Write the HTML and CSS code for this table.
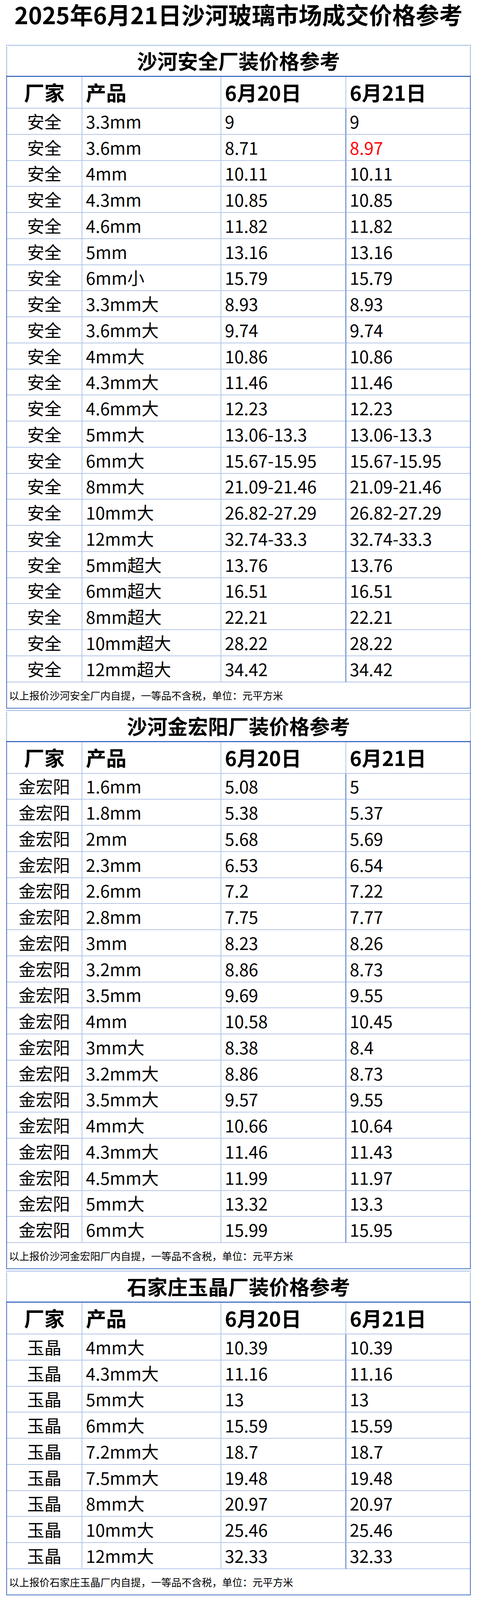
FILE: index.html
```html
<!DOCTYPE html>
<html lang="zh-CN">
<head>
<meta charset="utf-8">
<title>2025年6月21日沙河玻璃市场成交价格参考</title>
<link rel="stylesheet" href="styles.css">
</head>
<body>
<div class="page">
  <h1 class="page-title">2025年6月21日沙河玻璃市场成交价格参考</h1>

  <section class="section">
    <div class="section-title">沙河安全厂装价格参考</div>
    <div class="sheet">
      <div class="row head"><div class="cell maker">厂家</div><div class="cell">产品</div><div class="cell c3">6月20日</div><div class="cell">6月21日</div></div>
      <div class="row"><div class="cell maker">安全</div><div class="cell">3.3mm</div><div class="cell c3">9</div><div class="cell">9</div></div>
      <div class="row"><div class="cell maker">安全</div><div class="cell">3.6mm</div><div class="cell c3">8.71</div><div class="cell up">8.97</div></div>
      <div class="row"><div class="cell maker">安全</div><div class="cell">4mm</div><div class="cell c3">10.11</div><div class="cell">10.11</div></div>
      <div class="row"><div class="cell maker">安全</div><div class="cell">4.3mm</div><div class="cell c3">10.85</div><div class="cell">10.85</div></div>
      <div class="row"><div class="cell maker">安全</div><div class="cell">4.6mm</div><div class="cell c3">11.82</div><div class="cell">11.82</div></div>
      <div class="row"><div class="cell maker">安全</div><div class="cell">5mm</div><div class="cell c3">13.16</div><div class="cell">13.16</div></div>
      <div class="row"><div class="cell maker">安全</div><div class="cell">6mm小</div><div class="cell c3">15.79</div><div class="cell">15.79</div></div>
      <div class="row"><div class="cell maker">安全</div><div class="cell">3.3mm大</div><div class="cell c3">8.93</div><div class="cell">8.93</div></div>
      <div class="row"><div class="cell maker">安全</div><div class="cell">3.6mm大</div><div class="cell c3">9.74</div><div class="cell">9.74</div></div>
      <div class="row"><div class="cell maker">安全</div><div class="cell">4mm大</div><div class="cell c3">10.86</div><div class="cell">10.86</div></div>
      <div class="row"><div class="cell maker">安全</div><div class="cell">4.3mm大</div><div class="cell c3">11.46</div><div class="cell">11.46</div></div>
      <div class="row"><div class="cell maker">安全</div><div class="cell">4.6mm大</div><div class="cell c3">12.23</div><div class="cell">12.23</div></div>
      <div class="row"><div class="cell maker">安全</div><div class="cell">5mm大</div><div class="cell c3">13.06-13.3</div><div class="cell">13.06-13.3</div></div>
      <div class="row"><div class="cell maker">安全</div><div class="cell">6mm大</div><div class="cell c3">15.67-15.95</div><div class="cell">15.67-15.95</div></div>
      <div class="row"><div class="cell maker">安全</div><div class="cell">8mm大</div><div class="cell c3">21.09-21.46</div><div class="cell">21.09-21.46</div></div>
      <div class="row"><div class="cell maker">安全</div><div class="cell">10mm大</div><div class="cell c3">26.82-27.29</div><div class="cell">26.82-27.29</div></div>
      <div class="row"><div class="cell maker">安全</div><div class="cell">12mm大</div><div class="cell c3">32.74-33.3</div><div class="cell">32.74-33.3</div></div>
      <div class="row"><div class="cell maker">安全</div><div class="cell">5mm超大</div><div class="cell c3">13.76</div><div class="cell">13.76</div></div>
      <div class="row"><div class="cell maker">安全</div><div class="cell">6mm超大</div><div class="cell c3">16.51</div><div class="cell">16.51</div></div>
      <div class="row"><div class="cell maker">安全</div><div class="cell">8mm超大</div><div class="cell c3">22.21</div><div class="cell">22.21</div></div>
      <div class="row"><div class="cell maker">安全</div><div class="cell">10mm超大</div><div class="cell c3">28.22</div><div class="cell">28.22</div></div>
      <div class="row"><div class="cell maker">安全</div><div class="cell">12mm超大</div><div class="cell c3">34.42</div><div class="cell">34.42</div></div>
      <div class="note">以上报价沙河安全厂内自提，一等品不含税，单位：元平方米</div>
    </div>
  </section>

  <section class="section">
    <div class="section-title">沙河金宏阳厂装价格参考</div>
    <div class="sheet">
      <div class="row head"><div class="cell maker">厂家</div><div class="cell">产品</div><div class="cell c3">6月20日</div><div class="cell">6月21日</div></div>
      <div class="row"><div class="cell maker">金宏阳</div><div class="cell">1.6mm</div><div class="cell c3">5.08</div><div class="cell">5</div></div>
      <div class="row"><div class="cell maker">金宏阳</div><div class="cell">1.8mm</div><div class="cell c3">5.38</div><div class="cell">5.37</div></div>
      <div class="row"><div class="cell maker">金宏阳</div><div class="cell">2mm</div><div class="cell c3">5.68</div><div class="cell">5.69</div></div>
      <div class="row"><div class="cell maker">金宏阳</div><div class="cell">2.3mm</div><div class="cell c3">6.53</div><div class="cell">6.54</div></div>
      <div class="row"><div class="cell maker">金宏阳</div><div class="cell">2.6mm</div><div class="cell c3">7.2</div><div class="cell">7.22</div></div>
      <div class="row"><div class="cell maker">金宏阳</div><div class="cell">2.8mm</div><div class="cell c3">7.75</div><div class="cell">7.77</div></div>
      <div class="row"><div class="cell maker">金宏阳</div><div class="cell">3mm</div><div class="cell c3">8.23</div><div class="cell">8.26</div></div>
      <div class="row"><div class="cell maker">金宏阳</div><div class="cell">3.2mm</div><div class="cell c3">8.86</div><div class="cell">8.73</div></div>
      <div class="row"><div class="cell maker">金宏阳</div><div class="cell">3.5mm</div><div class="cell c3">9.69</div><div class="cell">9.55</div></div>
      <div class="row"><div class="cell maker">金宏阳</div><div class="cell">4mm</div><div class="cell c3">10.58</div><div class="cell">10.45</div></div>
      <div class="row"><div class="cell maker">金宏阳</div><div class="cell">3mm大</div><div class="cell c3">8.38</div><div class="cell">8.4</div></div>
      <div class="row"><div class="cell maker">金宏阳</div><div class="cell">3.2mm大</div><div class="cell c3">8.86</div><div class="cell">8.73</div></div>
      <div class="row"><div class="cell maker">金宏阳</div><div class="cell">3.5mm大</div><div class="cell c3">9.57</div><div class="cell">9.55</div></div>
      <div class="row"><div class="cell maker">金宏阳</div><div class="cell">4mm大</div><div class="cell c3">10.66</div><div class="cell">10.64</div></div>
      <div class="row"><div class="cell maker">金宏阳</div><div class="cell">4.3mm大</div><div class="cell c3">11.46</div><div class="cell">11.43</div></div>
      <div class="row"><div class="cell maker">金宏阳</div><div class="cell">4.5mm大</div><div class="cell c3">11.99</div><div class="cell">11.97</div></div>
      <div class="row"><div class="cell maker">金宏阳</div><div class="cell">5mm大</div><div class="cell c3">13.32</div><div class="cell">13.3</div></div>
      <div class="row"><div class="cell maker">金宏阳</div><div class="cell">6mm大</div><div class="cell c3">15.99</div><div class="cell">15.95</div></div>
      <div class="note">以上报价沙河金宏阳厂内自提，一等品不含税，单位：元平方米</div>
    </div>
  </section>

  <section class="section">
    <div class="section-title">石家庄玉晶厂装价格参考</div>
    <div class="sheet">
      <div class="row head"><div class="cell maker">厂家</div><div class="cell">产品</div><div class="cell c3">6月20日</div><div class="cell">6月21日</div></div>
      <div class="row"><div class="cell maker">玉晶</div><div class="cell">4mm大</div><div class="cell c3">10.39</div><div class="cell">10.39</div></div>
      <div class="row"><div class="cell maker">玉晶</div><div class="cell">4.3mm大</div><div class="cell c3">11.16</div><div class="cell">11.16</div></div>
      <div class="row"><div class="cell maker">玉晶</div><div class="cell">5mm大</div><div class="cell c3">13</div><div class="cell">13</div></div>
      <div class="row"><div class="cell maker">玉晶</div><div class="cell">6mm大</div><div class="cell c3">15.59</div><div class="cell">15.59</div></div>
      <div class="row"><div class="cell maker">玉晶</div><div class="cell">7.2mm大</div><div class="cell c3">18.7</div><div class="cell">18.7</div></div>
      <div class="row"><div class="cell maker">玉晶</div><div class="cell">7.5mm大</div><div class="cell c3">19.48</div><div class="cell">19.48</div></div>
      <div class="row"><div class="cell maker">玉晶</div><div class="cell">8mm大</div><div class="cell c3">20.97</div><div class="cell">20.97</div></div>
      <div class="row"><div class="cell maker">玉晶</div><div class="cell">10mm大</div><div class="cell c3">25.46</div><div class="cell">25.46</div></div>
      <div class="row"><div class="cell maker">玉晶</div><div class="cell">12mm大</div><div class="cell c3">32.33</div><div class="cell">32.33</div></div>
      <div class="note">以上报价石家庄玉晶厂内自提，一等品不含税，单位：元平方米</div>
    </div>
  </section>
</div>
</body>
</html>
```

FILE: styles.css
```css
html, body {
  margin: 0;
  padding: 0;
  background: #ffffff;
}

body {
  font-family: "Noto Sans CJK SC", "Noto Sans", "Liberation Sans", sans-serif;
  color: #000000;
}

.page {
  padding: 0 16px 12px;
}

.page-title {
  margin: 0;
  height: 115px;
  line-height: 72px;
  text-align: center;
  font-size: 60px;
  font-weight: 700;
  white-space: nowrap;
}

.section + .section {
  margin-top: 4px;
}

.section-title {
  box-sizing: border-box;
  height: 79px;
  border: 2px dotted #4472c4;
  border-bottom: 0;
  display: flex;
  align-items: center;
  justify-content: center;
  font-size: 52px;
  font-weight: 700;
  line-height: 1.2;
  white-space: nowrap;
}

.sheet {
  border: 2px solid #4472c4;
  border-top-width: 3px;
}

.row {
  display: grid;
  grid-template-columns: 193px 356px 320px 1fr;
  height: 66.75px;
}

.row.head {
  height: 81px;
}

.cell {
  box-sizing: border-box;
  display: flex;
  align-items: center;
  padding-left: 9px;
  border-right: 2px solid #b4c6e7;
  border-bottom: 2px solid #b4c6e7;
  font-size: 44px;
  line-height: 1.2;
  white-space: nowrap;
}

.cell:last-child {
  border-right: 0;
}

.row .cell.c3 {
  border-right-color: #4472c4;
}

.row.head .cell.c3 {
  border-right-color: #b4c6e7;
}

.cell.maker {
  justify-content: center;
  padding-left: 0;
}

.row.head .cell {
  font-size: 52px;
  font-weight: 700;
}

.cell.up {
  color: #ff0000;
}

.note {
  height: 65px;
  display: flex;
  align-items: center;
  padding-left: 5px;
  font-size: 26px;
  white-space: nowrap;
}
```
